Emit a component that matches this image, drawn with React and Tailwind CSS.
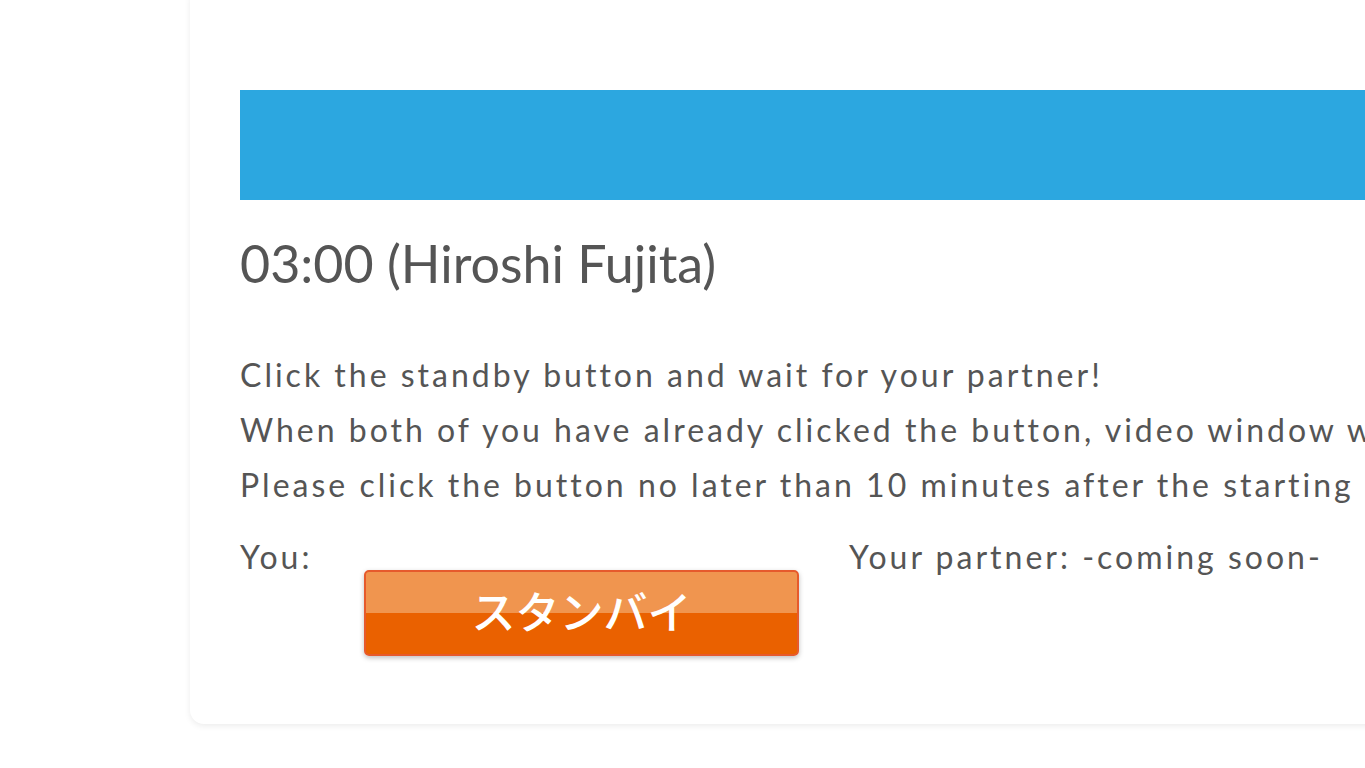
export default function App() {
  return (
    <div className="w-[1365px] h-[768px] overflow-hidden bg-white" style={{ fontFamily: 'Lato, "Noto Sans CJK JP", sans-serif' }}>
      <div className="ml-[190px] -mt-[12px] w-[1300px] rounded-[14px] bg-white pl-[50px] pt-[102px] pb-[68px] shadow-[0_2px_6px_rgba(0,0,0,0.08)]">
        <div className="h-[110px] bg-[#2ca7e0]" />
        <h1 className="mt-[33px] text-[52px] leading-[60px] text-[#555]">03:00 (Hiroshi Fujita)</h1>
        <div className="mt-[54px] whitespace-nowrap text-[32px] leading-[55px] tracking-[3px] text-[#555]">
          <p>Click the standby button and wait for your partner!</p>
          <p>When both of you have already clicked the button, video window will open.</p>
          <p>Please click the button no later than 10 minutes after the starting time.</p>
        </div>
        <div className="mt-[22px] flex items-start whitespace-nowrap text-[32px] leading-[45px] tracking-[3px] text-[#555]">
          <div className="w-[609px] shrink-0">
            <p>You:</p>
            <button className="ml-[124px] -mt-[9px] block h-[86px] w-[435px] overflow-hidden rounded-[5px] border-2 border-[#e65a2c] bg-[linear-gradient(#f0954f_0,#f0954f_50%,#ea6100_50%,#ea6100_100%)] pb-[6px] text-[44px] font-medium leading-[74px] tracking-normal text-white shadow-[0_2px_5px_rgba(0,0,0,0.25)]" style={{ fontFamily: '"Noto Sans CJK JP", sans-serif' }}>
              スタンバイ
            </button>
          </div>
          <p>Your partner: -coming soon-</p>
        </div>
      </div>
    </div>
  )
}
